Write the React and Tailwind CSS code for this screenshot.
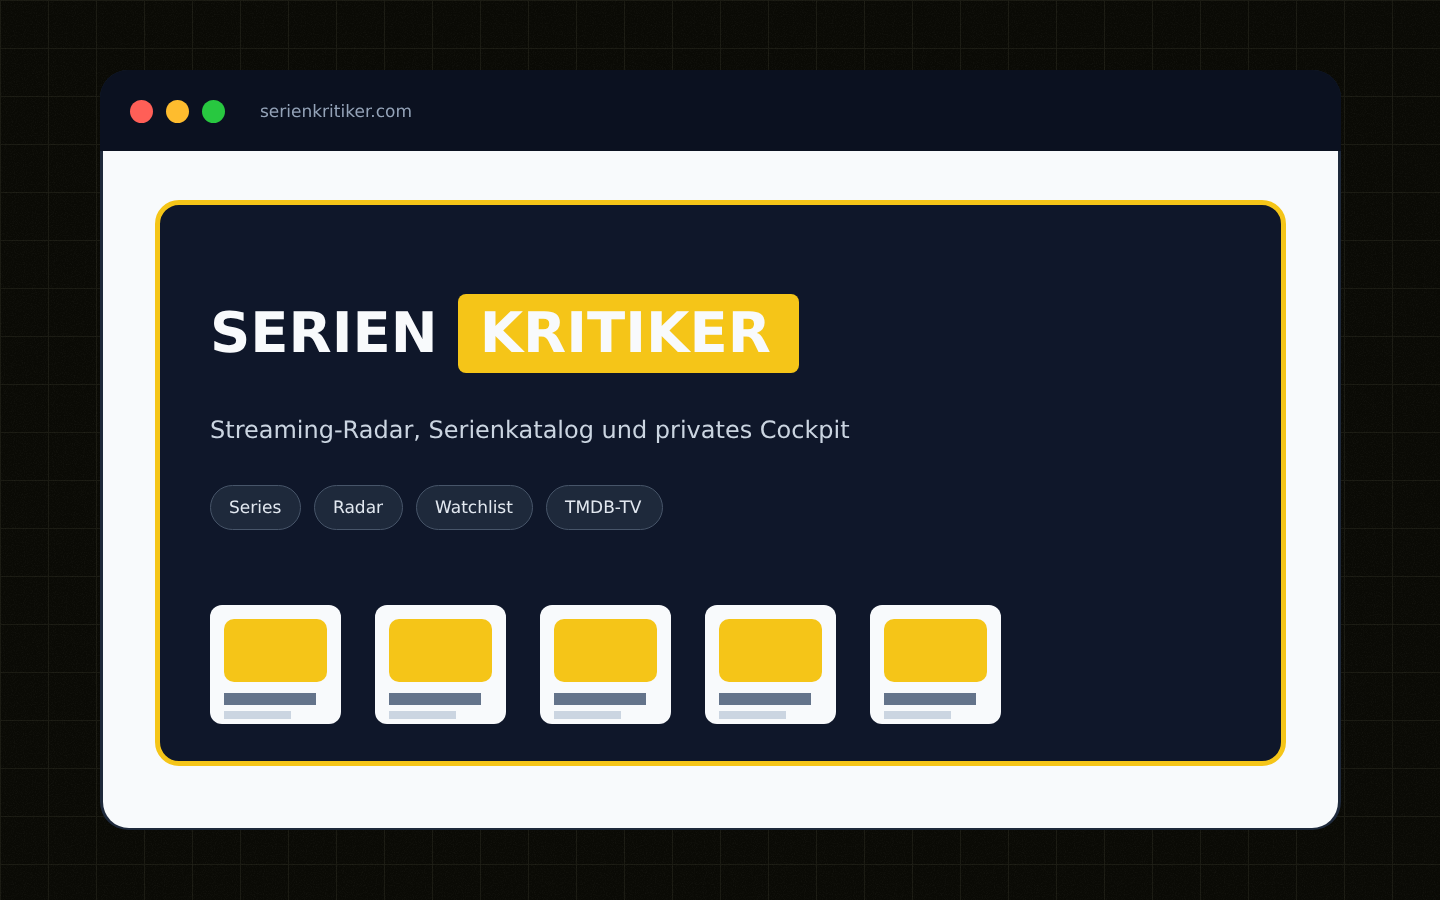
const pills = [
  { label: "Series", width: "w-[91px]" },
  { label: "Radar", width: "w-[89px]" },
  { label: "Watchlist", width: "w-[117px]" },
  { label: "TMDB-TV", width: "w-[117px]" },
];
const cards = [1, 2, 3, 4, 5];

function App() {
  return (
    <div className="relative h-[900px] w-[1440px] overflow-hidden bg-[#0a0a05] bg-[linear-gradient(#1a1a12_1px,transparent_1px),linear-gradient(90deg,#1a1a12_1px,transparent_1px)] bg-[size:48px_48px] pt-[70px] pl-[100px] font-['DejaVu_Sans',sans-serif] [text-rendering:geometricPrecision]">
      {/* speckle on the page background */}
      <svg className="absolute inset-0 opacity-[0.05]" width="1440" height="900">
        <filter id="speckle">
          <feTurbulence type="fractalNoise" baseFrequency="0.9" numOctaves="2" />
          <feColorMatrix values="0 0 0 0 1  0 0 0 0 1  0 0 0 0 0.9  0 0 0 1.6 -0.7" />
        </filter>
        <rect width="1440" height="900" filter="url(#speckle)" />
      </svg>
      <div className="relative flex h-[760px] w-[1241px] flex-col overflow-hidden rounded-[28px] bg-[#1e293b] will-change-transform">
        <div className="flex h-[81px] shrink-0 items-center bg-[#0b1120] pt-[2px] pl-[30px]">
          <div className="flex gap-[13px]">
            <span className="h-[23px] w-[23px] rounded-full bg-[#ff5f57]" />
            <span className="h-[23px] w-[23px] rounded-full bg-[#febc2e]" />
            <span className="h-[23px] w-[23px] rounded-full bg-[#28c840]" />
          </div>
          <span className="ml-[35px] text-[17px] leading-[24px] text-[#94a3b8]">serienkritiker.com</span>
        </div>
        <div className="mx-[3px] mb-[2px] flex-1 rounded-b-[26px] bg-[#f8fafc] pt-[49px] pl-[52px]">
          <div className="h-[566px] w-[1131px] rounded-[24px] border-[5px] border-[#f5c518] bg-[#0f172a] pt-[89px] pl-[50px]">
            <div className="flex items-center">
              <span className="text-[56px] leading-[79px] font-bold text-[#f8fafc]">SERIEN</span>
              <span className="ml-[20px] h-[79px] w-[341px] rounded-[8px] bg-[#f5c518] pl-[22px] text-[56px] leading-[79px] font-bold text-[#f8fafc]">KRITIKER</span>
            </div>
            <p className="mt-[41px] text-[24px] leading-[32px] text-[#cbd5e1]">Streaming-Radar, Serienkatalog und privates Cockpit</p>
            <div className="mt-[39px] flex gap-[13px]">
              {pills.map((pill) => (
                <span key={pill.label} className={`flex h-[45px] items-center rounded-full border border-[#475569] bg-[#1e293b] pt-[2px] pl-[18px] text-[17px] text-[#e2e8f0] ${pill.width}`}>
                  {pill.label}
                </span>
              ))}
            </div>
            <div className="mt-[75px] flex gap-[34px]">
              {cards.map((card) => (
                <div key={card} className="h-[119px] w-[131px] rounded-[12px] bg-[#f8fafc] pt-[14px] pl-[14px]">
                  <div className="h-[63px] w-[103px] rounded-[10px] bg-[#f5c518]" />
                  <div className="mt-[11px] h-[12px] w-[92px] bg-[#64748b]" />
                  <div className="mt-[6px] h-[8px] w-[67px] bg-[#cbd5e1]" />
                </div>
              ))}
            </div>
          </div>
        </div>
      </div>
    </div>
  );
}

export default App;
